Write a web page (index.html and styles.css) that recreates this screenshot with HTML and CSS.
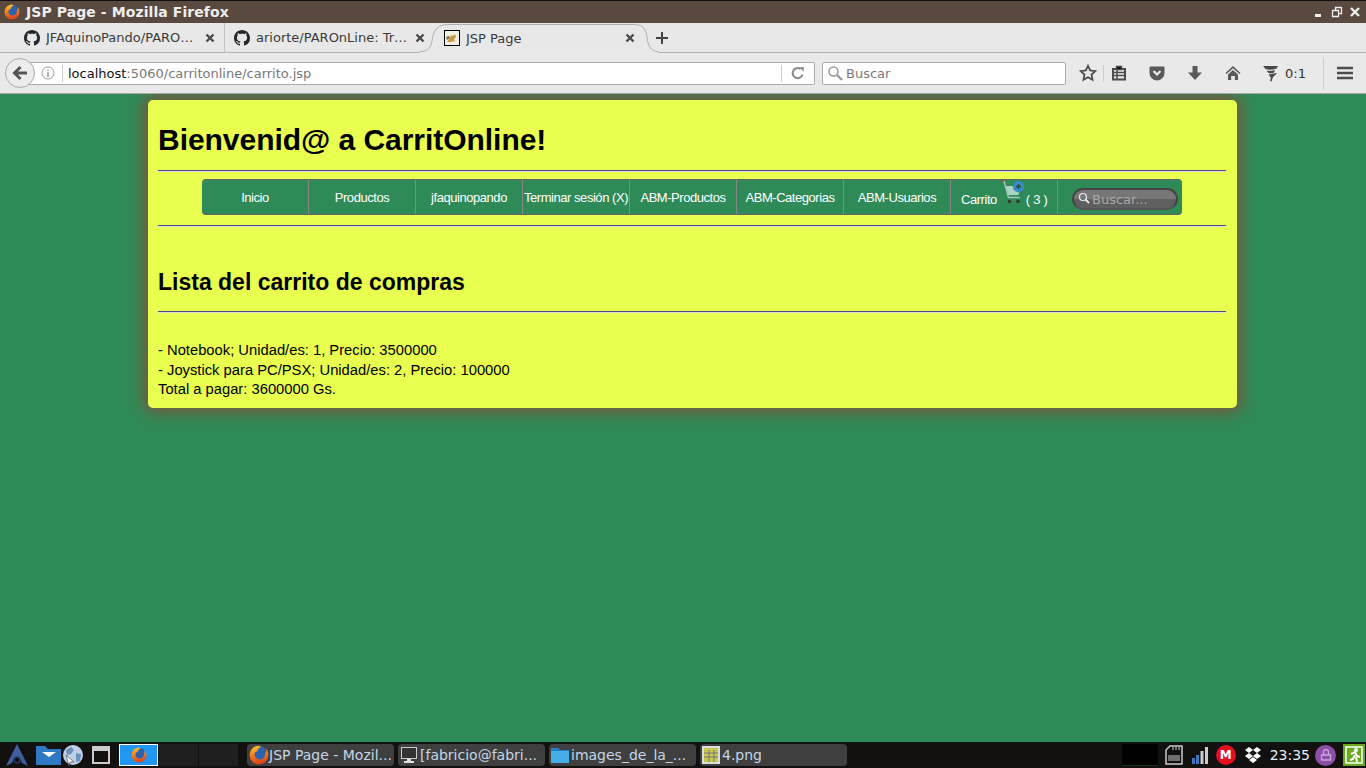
FILE: index.html
```html
<!DOCTYPE html>
<html lang="es">
<head>
    <meta charset="UTF-8">
    <title>JSP Page</title>
    <link rel="stylesheet" href="styles.css">
</head>
<body>
    <svg class="defs" width="0" height="0">
        <defs>
            <linearGradient id="foxfill" x1="0.3" y1="0" x2="0.5" y2="1">
                <stop offset="0" stop-color="#ffc02e"/>
                <stop offset="0.5" stop-color="#f2791c"/>
                <stop offset="1" stop-color="#d9401a"/>
            </linearGradient>
        </defs>
        <symbol id="github" viewBox="0 0 16 16">
            <path fill="#24292e" d="M8 0C3.58 0 0 3.58 0 8c0 3.54 2.29 6.53 5.47 7.59.4.07.55-.17.55-.38 0-.19-.01-.82-.01-1.49-2.01.37-2.53-.49-2.69-.94-.09-.23-.48-.94-.82-1.13-.28-.15-.68-.52-.01-.53.63-.01 1.08.58 1.23.82.72 1.21 1.87.87 2.33.66.07-.52.28-.87.51-1.07-1.78-.2-3.64-.89-3.64-3.95 0-.87.31-1.59.82-2.15-.08-.2-.36-1.02.08-2.12 0 0 .67-.21 2.2.82.64-.18 1.32-.27 2-.27.68 0 1.36.09 2 .27 1.53-1.04 2.2-.82 2.2-.82.44 1.1.16 1.92.08 2.12.51.56.82 1.27.82 2.15 0 3.07-1.87 3.75-3.65 3.95.29.25.54.73.54 1.48 0 1.07-.01 1.93-.01 2.2 0 .21.15.46.55.38A8.013 8.013 0 0016 8c0-4.42-3.58-8-8-8z"/>
        </symbol>
        <symbol id="firefox" viewBox="0 0 16 16">
            <circle cx="8.500" cy="7.500" r="6.500" fill="#2a62ad"/>
            <path fill="url(#foxfill)" d="M8 .5A7.500 7.500 0 1 0 15.500 8c0-2-.7-3.700-1.700-5 .2 2-.3 3-.8 3.500 0 3-2 5-4.500 5s-4.300-2-4-4.300c.3-1.700 1.500-2.400 2.500-2.200 0-1.500.8-2.800 2.500-3.500C9 1 8.500.5 8 .5z"/>
        </symbol>
        <symbol id="close" viewBox="0 0 10 10">
            <path stroke="#4a4a4a" stroke-width="2.400" d="M1.500 1.500l7 7M8.500 1.500l-7 7"/>
        </symbol>
    </svg>

    <header class="titlebar">
        <svg class="icon-16"><use href="#firefox"/></svg>
        <span class="titlebar-text">JSP Page - Mozilla Firefox</span>
        <div class="window-buttons">
            <svg width="12" height="12" viewBox="0 0 12 12"><rect x="2" y="8" width="6" height="3" fill="#eee"/></svg>
            <svg width="12" height="12" viewBox="0 0 12 12"><path fill="none" stroke="#eee" stroke-width="1.300" d="M1.500 4.500h6v6h-6zM4.500 4.500v-3h6v6h-3"/></svg>
            <svg width="12" height="12" viewBox="0 0 12 12"><path stroke="#eee" stroke-width="2.400" d="M2 2l8 8M10 2l-8 8"/></svg>
        </div>
    </header>

    <div class="tabbar">
        <div class="tab tab-first">
            <svg class="icon-16"><use href="#github"/></svg>
            <span class="tab-label">JFAquinoPando/PARO…</span>
            <svg class="tab-close"><use href="#close"/></svg>
        </div>
        <div class="tab tab-sep">
            <svg class="icon-16"><use href="#github"/></svg>
            <span class="tab-label">ariorte/PAROnLine: Tr…</span>
            <svg class="tab-close"><use href="#close"/></svg>
        </div>
        <div class="tab tab-active">
            <svg class="tab-outline" width="240" height="30" viewBox="0 0 240 30">
                <path fill="#e8e8e8" d="M0 30V28.500C8 28.500 11 24 12 18 13 8 17 1.500 28 1.500H214C223 1.500 226 6 227 14 228 23 231 28.500 238 28.500V30z"/>
                <path fill="none" stroke="#b0b0b0" d="M0 28.500C8 28.500 11 24 12 18 13 8 17 1.500 28 1.500H214C223 1.500 226 6 227 14 228 23 231 28.500 238 28.500"/>
            </svg>
            <span class="favicon"><svg width="14" height="14" viewBox="0 0 14 14"><rect width="14" height="14" fill="#f4f0e4"/><path fill="#c9963c" d="M2 11l3-4 1-3 2 1 2-2 1 3-2 2 1 3-2-1-2 1z"/><path fill="#7a6a50" d="M1 6l3-1 1 2-3 2z"/></svg></span>
            <span class="tab-label">JSP Page</span>
            <svg class="tab-close"><use href="#close"/></svg>
        </div>
        <svg class="tab-new" width="16" height="16" viewBox="0 0 16 16"><path stroke="#444" stroke-width="2" d="M8 2v12M2 8h12"/></svg>
    </div>

    <div class="toolbar">
        <div class="back-btn">
            <svg width="18" height="18" viewBox="0 0 18 18"><path fill="none" stroke="#555" stroke-width="3" d="M16 9H4M9.500 3L3.500 9l6 6"/></svg>
        </div>
        <div class="urlbar">
            <svg class="info" width="14" height="14" viewBox="0 0 14 14"><circle cx="7" cy="7" r="6" fill="none" stroke="#999"/><path stroke="#999" stroke-width="1.500" d="M7 6v5M7 3.200v1.500"/></svg>
            <span class="url"><span class="url-host">localhost</span>:5060/carritonline/carrito.jsp</span>
            <span class="reload">
                <svg width="14" height="14" viewBox="0 0 14 14"><path fill="none" stroke="#888" stroke-width="2" d="M11.500 8.500A5 5 0 1 1 9.500 3"/><path fill="#888" d="M8.500 1.500l4.500-.5-.5 4.500z"/></svg>
            </span>
        </div>
        <div class="searchbar">
            <svg width="16" height="16" viewBox="0 0 16 16"><circle cx="6.500" cy="6.500" r="4.500" fill="none" stroke="#999" stroke-width="1.500"/><path stroke="#999" stroke-width="2.400" d="M10 10l5 5"/></svg>
            <span>Buscar</span>
        </div>
        <div class="tools">
            <svg class="tool-star" width="18" height="18" viewBox="0 0 18 18"><path fill="none" stroke="#4c4c4c" stroke-width="1.800" d="M9 1.800l2.200 4.700 5.100.6-3.800 3.500 1 5.100L9 13.200l-4.500 2.500 1-5.100-3.800-3.500 5.100-.6z"/></svg>
            <span class="tool-sep"></span>
            <svg class="tool-list" width="16" height="16" viewBox="0 0 16 16"><path fill="none" stroke="#4c4c4c" stroke-width="2" d="M2 4h12v10.500H2z"/><path stroke="#4c4c4c" stroke-width="1.500" d="M5.500 1.500h5v3h-5zM2 7.500h12M2 10.500h12M6 5v9"/></svg>
            <svg class="tool-pocket" width="16" height="16" viewBox="0 0 16 16"><path fill="#5a5a5a" d="M1.500 1.500h13a1 1 0 0 1 1 1V8a7.500 7.500 0 0 1-15 0V2.500a1 1 0 0 1 1-1z"/><path fill="none" stroke="#e8e8e8" stroke-width="2.200" d="M4.500 6L8 9.500 11.500 6"/></svg>
            <svg class="tool-down" width="16" height="16" viewBox="0 0 16 16"><path fill="#5a5a5a" d="M5.500 1h5v6.500H15L8 15 1 7.500h4.500z"/></svg>
            <svg class="tool-home" width="16" height="16" viewBox="0 0 16 16"><path fill="#5a5a5a" d="M8 1l7.500 7-1 1L8 3.200 1.500 9l-1-1zM3 9.500L8 5l5 4.500V15h-3.200v-4H6.200v4H3z"/></svg>
            <svg class="tool-storm" width="16" height="17" viewBox="0 0 16 17"><path fill="#4a4a4a" d="M0 1h15l-1.500 2.500C10 5 6 5 2.500 4zM3.500 5.500c2.500.6 5.500.6 8.500-.5l-1 2.500c-2 1-4 1-5.500.5zM6 9c1.500.3 3 .2 4.500-.5L14 8c-1 1.500-3 3-4 4l-1.500 4.500L7 16l1-3.500c-1 0-1.500-1.500-2-3.500z"/></svg>
            <span class="tool-count">0:1</span>
            <span class="tool-sep tool-sep-tall"></span>
            <svg class="tool-menu" width="18" height="14" viewBox="0 0 18 14"><path stroke="#4c4c4c" stroke-width="2.400" d="M1 2h16M1 7h16M1 12h16"/></svg>
        </div>
    </div>

    <main class="page">
        <section class="panel">
            <h1>Bienvenid@ a CarritOnline!</h1>
            <hr>
            <nav class="menu">
                <a class="menu-item">Inicio</a>
                <a class="menu-item">Productos</a>
                <a class="menu-item">jfaquinopando</a>
                <a class="menu-item">Terminar sesión (X)</a>
                <a class="menu-item">ABM-Productos</a>
                <a class="menu-item">ABM-Categorias</a>
                <a class="menu-item">ABM-Usuarios</a>
                <a class="menu-item menu-cart">
                    <span>Carrito</span>
                    <svg class="cart-icon" width="24" height="25" viewBox="0 0 24 25">
                        <path fill="none" stroke="#d33" stroke-width="1.500" d="M0 1h3"/>
                        <path fill="#a9d3c2" d="M4.500 6h15l-2 9H7z"/>
                        <path fill="none" stroke="#a5c4b8" stroke-width="1.500" d="M3 1l4.500 16.500H19"/>
                        <circle cx="8.500" cy="21.500" r="1.800" fill="#333"/>
                        <circle cx="17" cy="21.500" r="1.800" fill="#333"/>
                        <circle cx="17.500" cy="6.500" r="5.800" fill="#3a8ac4"/>
                        <path stroke="#1d4f4a" stroke-width="1.500" d="M17.500 4v5M15 6.500h5"/>
                    </svg>
                    <span class="cart-count">( 3 )</span>
                </a>
                <div class="menu-search">
                    <div class="menu-search-box">
                        <svg class="search-glass" width="12" height="12" viewBox="0 0 12 12"><circle cx="5" cy="5" r="3.500" fill="none" stroke="#eee" stroke-width="1.200"/><path stroke="#eee" stroke-width="1.800" d="M7.500 7.500l3.500 3.500"/></svg>
                        <span>Buscar...</span>
                    </div>
                </div>
            </nav>
            <hr>
            <h2>Lista del carrito de compras</h2>
            <hr>
            <div class="cart-list">
                <p>- Notebook; Unidad/es: 1, Precio: 3500000</p>
                <p>- Joystick para PC/PSX; Unidad/es: 2, Precio: 100000</p>
                <p>Total a pagar: 3600000 Gs.</p>
            </div>
        </section>
    </main>

    <footer class="taskbar">
        <div class="launchers">
            <svg width="26" height="24" viewBox="0 0 26 24"><path fill="#3f5f9f" d="M13 1l11 22-6-3c-1-4-3-6-5-6s-4 2-5 6l-6 3z"/><circle cx="13" cy="17" r="3" fill="none" stroke="#29396a" stroke-width="1.500"/></svg>
            <svg class="launch-mail" width="25" height="20" viewBox="0 0 25 20"><path fill="#2f79c4" d="M0 1h9l3 3h13v16H0z"/><path fill="#fff" d="M6 7h14l-7 5z"/></svg>
            <svg class="launch-web" width="22" height="22" viewBox="0 0 22 22"><circle cx="11" cy="11" r="10" fill="#bcd0e8"/><path fill="#6d8fb8" d="M4 6l5-3 3 3-3 4-4 1zM14 9l5 1-1 7-4 1z"/><path fill="#fff" stroke="#333" stroke-width=".6" d="M4 11l8 7-4 0-1 4z"/></svg>
            <span class="show-desktop"></span>
            <span class="pager pager-active"><svg class="icon-16"><use href="#firefox"/></svg></span>
            <span class="pager"></span>
            <span class="pager"></span>
        </div>
        <div class="tasks">
            <div class="task"><svg class="icon-18"><use href="#firefox"/></svg><span>JSP Page - Mozil...</span></div>
            <div class="task"><svg width="18" height="18" viewBox="0 0 18 18"><path fill="#ccc" d="M1 1h16v12H1z"/><path fill="#333" d="M2 2h14v10H2z"/><path fill="#ddd" d="M7 13h4v2h3v2H4v-2h3z"/></svg><span>[fabricio@fabri...</span></div>
            <div class="task"><svg width="18" height="18" viewBox="0 0 18 18"><path fill="#2a7fc4" d="M0 2h7l2 2h9v13H0z"/><path fill="#45aee8" d="M0 5h18v12H0z"/></svg><span>images_de_la_...</span></div>
            <div class="task"><svg width="18" height="18" viewBox="0 0 18 18"><path fill="#ddd" d="M0 0h18v18H0z"/><path fill="#c8c850" d="M2 2h14v14H2z"/><path stroke="#777" d="M2 7h14M2 11h14M7 4v12M12 4v12"/></svg><span>4.png</span></div>
        </div>
        <div class="tray">
            <span class="tray-graph"></span>
            <svg class="tray-card" width="18" height="20" viewBox="0 0 18 20"><path fill="none" stroke="#ccc" stroke-width="1.500" d="M5 1h12v18H1V5z"/><path stroke="#ccc" d="M3 11h12M3 13h12M3 15h12M8 2v3M11 2v3M14 2v3"/></svg>
            <svg width="18" height="18" viewBox="0 0 18 18"><path fill="#3b78c0" d="M1 12h3v6H1zM5 9h3v9H5z"/><path fill="#ccc" d="M9.500 5h3v13h-3zM14 1h3v17h-3z"/></svg>
            <span class="tray-mega">M</span>
            <svg width="18" height="16" viewBox="0 0 18 16"><path fill="#fff" d="M5 0l4 3-4 3-4-3zM13 0l4 3-4 3-4-3zM5 6l4 3-4 3-4-3zM13 6l4 3-4 3-4-3zM5 13l4-3 4 3-4 3z"/></svg>
            <span class="clock">23:35</span>
            <span class="tray-lock"><svg width="12" height="12" viewBox="0 0 12 12"><path fill="none" stroke="#c9a6d8" stroke-width="1.300" d="M1.500 6h9v5h-9zM3.500 6V3a2.500 2.500 0 0 1 5 0v3"/></svg></span>
            <span class="tray-exit"><svg width="20" height="20" viewBox="0 0 20 20"><path fill="none" stroke="#fff" stroke-width="1.500" d="M2 2h16v16H2z"/><circle cx="12" cy="5" r="2" fill="#fff"/><path fill="none" stroke="#fff" stroke-width="2" d="M7 9l4-2 2 4 3 1M11 10l-2 4-3 1M12 12l1 5"/></svg></span>
        </div>
    </footer>
</body>
</html>
```

FILE: styles.css
```css
* {
    box-sizing: border-box;
}

html, body {
    margin: 0;
    height: 100%;
    overflow: hidden;
}

body {
    display: flex;
    flex-direction: column;
    height: 768px;
    font-family: "DejaVu Sans", sans-serif;
}

.defs {
    position: absolute;
}

.icon-16 {
    width: 16px;
    height: 16px;
    flex: none;
}

.icon-18 {
    width: 20px;
    height: 20px;
    flex: none;
}

/* window title */
.titlebar {
    display: flex;
    align-items: center;
    height: 23px;
    padding-left: 4px;
    background: #59493f;
    border-top: 1px solid #111;
    color: #eee;
    position: relative;
    z-index: 2;
}

.titlebar-text {
    margin-left: 6px;
    font-size: 14px;
    font-weight: bold;
    letter-spacing: 0.08px;
}

.window-buttons {
    display: flex;
    gap: 6px;
    margin-left: auto;
    padding-right: 5px;
}

/* tabs */
.tabbar {
    display: flex;
    align-items: center;
    height: 30px;
    padding-left: 14px;
    background: #e8e8e8;
    border-bottom: 1px solid #b4b4b4;
    position: relative;
    z-index: 2;
}

.tab {
    display: flex;
    align-items: center;
    width: 211px;
    height: 29px;
    padding-left: 9px;
    font-size: 13px;
    color: #3a3a3a;
}

.tab-first {
    width: 210px;
    padding-left: 10px;
}

.tab-sep {
    border-left: 1px solid #c4c4c4;
}

.tab-label {
    margin-left: 6px;
    white-space: nowrap;
    overflow: hidden;
    flex: 1;
    position: relative;
}

.tab-close {
    width: 10px;
    height: 10px;
    margin-right: 10px;
    flex: none;
    position: relative;
}

.tab-first .tab-close {
    margin-right: 9px;
}

.tab-active {
    position: relative;
    width: 213px;
    height: 30px;
    align-self: flex-start;
    padding-left: 9px;
}

.tab-active .tab-close {
    margin-right: 13px;
}

.tab-outline {
    position: absolute;
    left: -15px;
    top: 0;
}

.favicon {
    display: flex;
    width: 16px;
    height: 16px;
    border: 1px solid #000;
    flex: none;
    position: relative;
}

.tab-new {
    margin-left: 6px;
    position: relative;
}

/* address bar */
.toolbar {
    display: flex;
    align-items: center;
    height: 41px;
    padding-left: 5px;
    background: #e9e9e9;
    border-bottom: 1px solid #a8a8a8;
    position: relative;
    z-index: 2;
}

.back-btn {
    display: flex;
    align-items: center;
    justify-content: center;
    width: 30px;
    height: 30px;
    flex: none;
    background: #ececec;
    border: 1px solid #aaa;
    border-radius: 50%;
    z-index: 1;
}

.urlbar {
    display: flex;
    align-items: center;
    width: 790px;
    height: 23px;
    margin-left: -10px;
    padding-left: 16px;
    background: #fff;
    border: 1px solid #aaa;
    border-left: 0;
    border-radius: 0 2px 2px 0;
    font-size: 13px;
    color: #777;
}

.url {
    margin-left: 7px;
    padding-left: 5px;
    border-left: 1px solid #ccc;
    line-height: 17px;
}

.url-host {
    color: #111;
}

.reload {
    display: flex;
    align-items: center;
    justify-content: center;
    margin-left: auto;
    width: 33px;
    height: 17px;
    border-left: 1px solid #ccc;
}

.searchbar {
    display: flex;
    align-items: center;
    gap: 3px;
    width: 244px;
    height: 23px;
    margin-left: 7px;
    padding-left: 4px;
    background: #fff;
    border: 1px solid #aaa;
    border-radius: 2px;
    font-size: 13px;
    color: #777;
}

.tools {
    display: flex;
    align-items: center;
    margin-left: 13px;
}

.tool-sep {
    width: 1px;
    height: 17px;
    margin-left: 6px;
    background: #ccc;
}

.tool-sep-tall {
    height: 33px;
    margin-left: 17px;
}

.tool-list {
    margin-left: 7px;
}

.tool-pocket,
.tool-down,
.tool-home,
.tool-storm {
    margin-left: 22px;
}

.tool-count {
    margin-left: 6px;
    font-size: 13px;
    color: #333;
}

.tool-menu {
    margin-left: 12px;
}

/* page content */
.page {
    flex: 1;
    background: #2e8b57;
    overflow: hidden;
}

.panel {
    width: 1089px;
    height: 308px;
    margin: 6px 0 0 148px;
    padding: 0 11px 0 10px;
    background: #e9ff4f;
    border-radius: 5px;
    box-shadow: 0 0 16px 4px #80523c;
    font-family: "Liberation Sans", Arial, sans-serif;
    color: #000;
}

.panel h1 {
    margin: 0;
    padding-top: 21px;
    height: 70px;
    font-size: 30px;
    line-height: 38px;
    letter-spacing: -0.04px;
}

.panel hr {
    margin: 0;
    height: 2px;
    border: 0;
    border-top: 1px solid #4a4a88;
    border-bottom: 1px solid #ddd;
}

.menu {
    display: flex;
    width: 980px;
    height: 36px;
    margin: 7px 0 10px 44px;
    background: #2e8b57;
    border-bottom: 1px solid #666;
    border-top: 1px solid #666;
    border-radius: 4px;
}

.menu-item {
    display: flex;
    align-items: center;
    justify-content: center;
    width: 107px;
    border-right: 1px solid #888;
    font-size: 13px;
    letter-spacing: -0.45px;
    color: #fff;
    white-space: nowrap;
}

.menu-cart {
    justify-content: flex-start;
    padding: 4px 0 0 10px;
    position: relative;
}

.cart-icon {
    position: absolute;
    left: 50px;
    top: 0;
}

.cart-count {
    margin-left: 29px;
    letter-spacing: -0.3px;
}

.menu-search {
    display: flex;
    align-items: center;
    flex: 1;
    padding: 4px 0 0 14px;
}

.menu-search-box {
    display: flex;
    align-items: center;
    gap: 2px;
    width: 106px;
    height: 22px;
    padding: 1px 0 0 4px;
    background: linear-gradient(#777 50%, #5f5f5f 50%);
    border: 2px solid #444;
    border-bottom-color: #555;
    border-radius: 11px;
    font-family: "DejaVu Sans", sans-serif;
    font-size: 13px;
    color: #aaa;
}

.search-glass {
    margin-top: -3px;
}

.panel h2 {
    margin: 0;
    padding-top: 40px;
    height: 84px;
    font-size: 23px;
    line-height: 30px;
}

.cart-list {
    padding-top: 28px;
    font-size: 14.75px;
    line-height: 19.500px;
}

.cart-list p {
    margin: 0;
}

/* desktop panel */
.taskbar {
    display: flex;
    align-items: center;
    height: 26px;
    background: #121110;
    color: #c4d6e6;
    font-size: 14px;
    position: relative;
    z-index: 2;
}

.launchers {
    display: flex;
    align-items: center;
    padding-left: 4px;
    width: 247px;
}

.launchers > svg {
    flex: none;
    margin-right: 4px;
}

.launchers > .launch-mail {
    margin-left: 2px;
    margin-right: 1px;
}

.show-desktop {
    width: 18px;
    height: 18px;
    margin: 0 9px 0 4px;
    border: 2px solid #ccc;
    border-top-width: 5px;
}

.pager {
    display: flex;
    align-items: center;
    justify-content: center;
    width: 39px;
    height: 22px;
    margin-right: 1px;
    background: #1f1f1f;
}

.pager-active {
    background: #2196f3;
    border: 1px solid #fff;
}

.tasks {
    display: flex;
    gap: 4.5px;
}

.task {
    display: flex;
    align-items: center;
    gap: 2px;
    width: 146.5px;
    height: 22px;
    padding-left: 2px;
    background: #3f3f3f;
    border-radius: 4px;
    white-space: nowrap;
    overflow: hidden;
}

.task .icon-18 {
    margin-right: -2px;
}

.tray {
    display: flex;
    align-items: center;
    margin-left: auto;
    gap: 7px;
    padding-right: 1px;
}

.tray-graph {
    width: 36px;
    height: 22px;
    background: #000;
    border-bottom: 1px solid #0b3a12;
}

.tray-card {
    margin-right: 1px;
}

.tray-mega {
    display: flex;
    align-items: center;
    justify-content: center;
    width: 20px;
    height: 20px;
    margin-right: 1px;
    background: #e2101e;
    border-radius: 50%;
    color: #fff;
    font-size: 12px;
    font-weight: bold;
}

.clock {
    margin: 0 -2px 0 1px;
    color: #e6eef5;
}

.tray-lock {
    display: flex;
    align-items: center;
    justify-content: center;
    width: 21px;
    height: 21px;
    background: #8c4fa8;
    border-radius: 50%;
}

.tray-exit {
    display: flex;
    align-items: center;
    justify-content: center;
    width: 22px;
    height: 22px;
    background: #6aa81e;
}
```
